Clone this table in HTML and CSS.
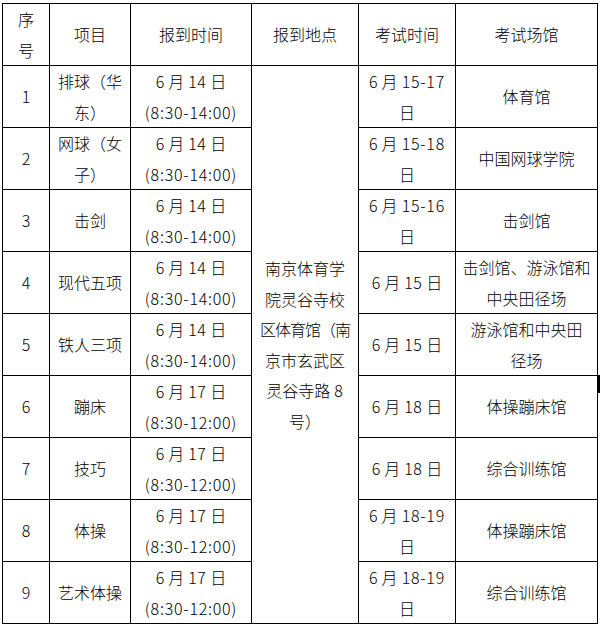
FILE: index.html
```html
<!DOCTYPE html>
<html lang="zh-CN">
<head>
<meta charset="utf-8">
<title>报到安排</title>
<link rel="stylesheet" href="styles.css">
</head>
<body>
<div class="page">
<table class="sched">
  <colgroup>
    <col class="c1"><col class="c2"><col class="c3"><col class="c4"><col class="c5"><col class="c6">
  </colgroup>
  <tr>
    <td>序<br>号</td>
    <td>项目</td>
    <td>报到时间</td>
    <td>报到地点</td>
    <td>考试时间</td>
    <td>考试场馆</td>
  </tr>
  <tr>
    <td>1</td>
    <td>排球（华<br>东）</td>
    <td><span class="gr">6</span>月<span class="g">14</span>日<br><span class="t">(8:30-14:00)</span></td>
    <td rowspan="9" class="addr">南京体育学<br>院灵谷寺校<br><span class="tight">区体育馆（南</span><br>京市玄武区<br>灵谷寺路<span class="gl">8</span><br>号）</td>
    <td><span class="gr">6</span>月<span class="gl">15-17</span><br>日</td>
    <td>体育馆</td>
  </tr>
  <tr>
    <td>2</td>
    <td>网球（女<br>子）</td>
    <td><span class="gr">6</span>月<span class="g">14</span>日<br><span class="t">(8:30-14:00)</span></td>
    <td><span class="gr">6</span>月<span class="gl">15-18</span><br>日</td>
    <td>中国网球学院</td>
  </tr>
  <tr>
    <td>3</td>
    <td>击剑</td>
    <td><span class="gr">6</span>月<span class="g">14</span>日<br><span class="t">(8:30-14:00)</span></td>
    <td><span class="gr">6</span>月<span class="gl">15-16</span><br>日</td>
    <td>击剑馆</td>
  </tr>
  <tr>
    <td>4</td>
    <td>现代五项</td>
    <td><span class="gr">6</span>月<span class="g">14</span>日<br><span class="t">(8:30-14:00)</span></td>
    <td><span class="gr">6</span>月<span class="g">15</span>日</td>
    <td>击剑馆、游泳馆和<br>中央田径场</td>
  </tr>
  <tr>
    <td>5</td>
    <td>铁人三项</td>
    <td><span class="gr">6</span>月<span class="g">14</span>日<br><span class="t">(8:30-14:00)</span></td>
    <td><span class="gr">6</span>月<span class="g">15</span>日</td>
    <td>游泳馆和中央田<br>径场</td>
  </tr>
  <tr>
    <td>6</td>
    <td>蹦床</td>
    <td><span class="gr">6</span>月<span class="g">17</span>日<br><span class="t">(8:30-12:00)</span></td>
    <td><span class="gr">6</span>月<span class="g">18</span>日</td>
    <td>体操蹦床馆</td>
  </tr>
  <tr>
    <td>7</td>
    <td>技巧</td>
    <td><span class="gr">6</span>月<span class="g">17</span>日<br><span class="t">(8:30-12:00)</span></td>
    <td><span class="gr">6</span>月<span class="g">18</span>日</td>
    <td>综合训练馆</td>
  </tr>
  <tr>
    <td>8</td>
    <td>体操</td>
    <td><span class="gr">6</span>月<span class="g">17</span>日<br><span class="t">(8:30-12:00)</span></td>
    <td><span class="gr">6</span>月<span class="gl">18-19</span><br>日</td>
    <td>体操蹦床馆</td>
  </tr>
  <tr>
    <td>9</td>
    <td>艺术体操</td>
    <td><span class="gr">6</span>月<span class="g">17</span>日<br><span class="t">(8:30-12:00)</span></td>
    <td><span class="gr">6</span>月<span class="gl">18-19</span><br>日</td>
    <td>综合训练馆</td>
  </tr>
</table>
<div class="mark"></div>
</div>
</body>
</html>
```

FILE: styles.css
```css
html, body {
  margin: 0;
  padding: 0;
  background: #ffffff;
}

.page {
  position: relative;
  width: 600px;
  height: 627px;
  padding: 3px 0 0 2px;
  box-sizing: border-box;
}

.sched {
  border-collapse: collapse;
  table-layout: fixed;
  width: 595px;
  font-family: "Noto Sans CJK SC", "Noto Sans", sans-serif;
  font-size: 16px;
  font-weight: 300;
  color: #000;
}

.c1 { width: 47px; }
.c2 { width: 81px; }
.c3 { width: 121px; }
.c4 { width: 107px; }
.c5 { width: 97px; }
.c6 { width: 142px; }

.sched td {
  border: 1px solid #000;
  padding: 0;
  height: 61px;
  line-height: 30.5px;
  text-align: center;
  vertical-align: middle;
  white-space: nowrap;
  overflow: hidden;
}

.addr .tight {
  letter-spacing: -1px;
}

.t {
  letter-spacing: 0.75px;
}

.g { margin: 0 4px; letter-spacing: 0.5px; }
.gr { margin-right: 4px; }
.gl { margin-left: 4px; letter-spacing: 0.75px; }

.mark {
  position: absolute;
  left: 597px;
  top: 375px;
  width: 3px;
  height: 18px;
  background: #000;
}
```
